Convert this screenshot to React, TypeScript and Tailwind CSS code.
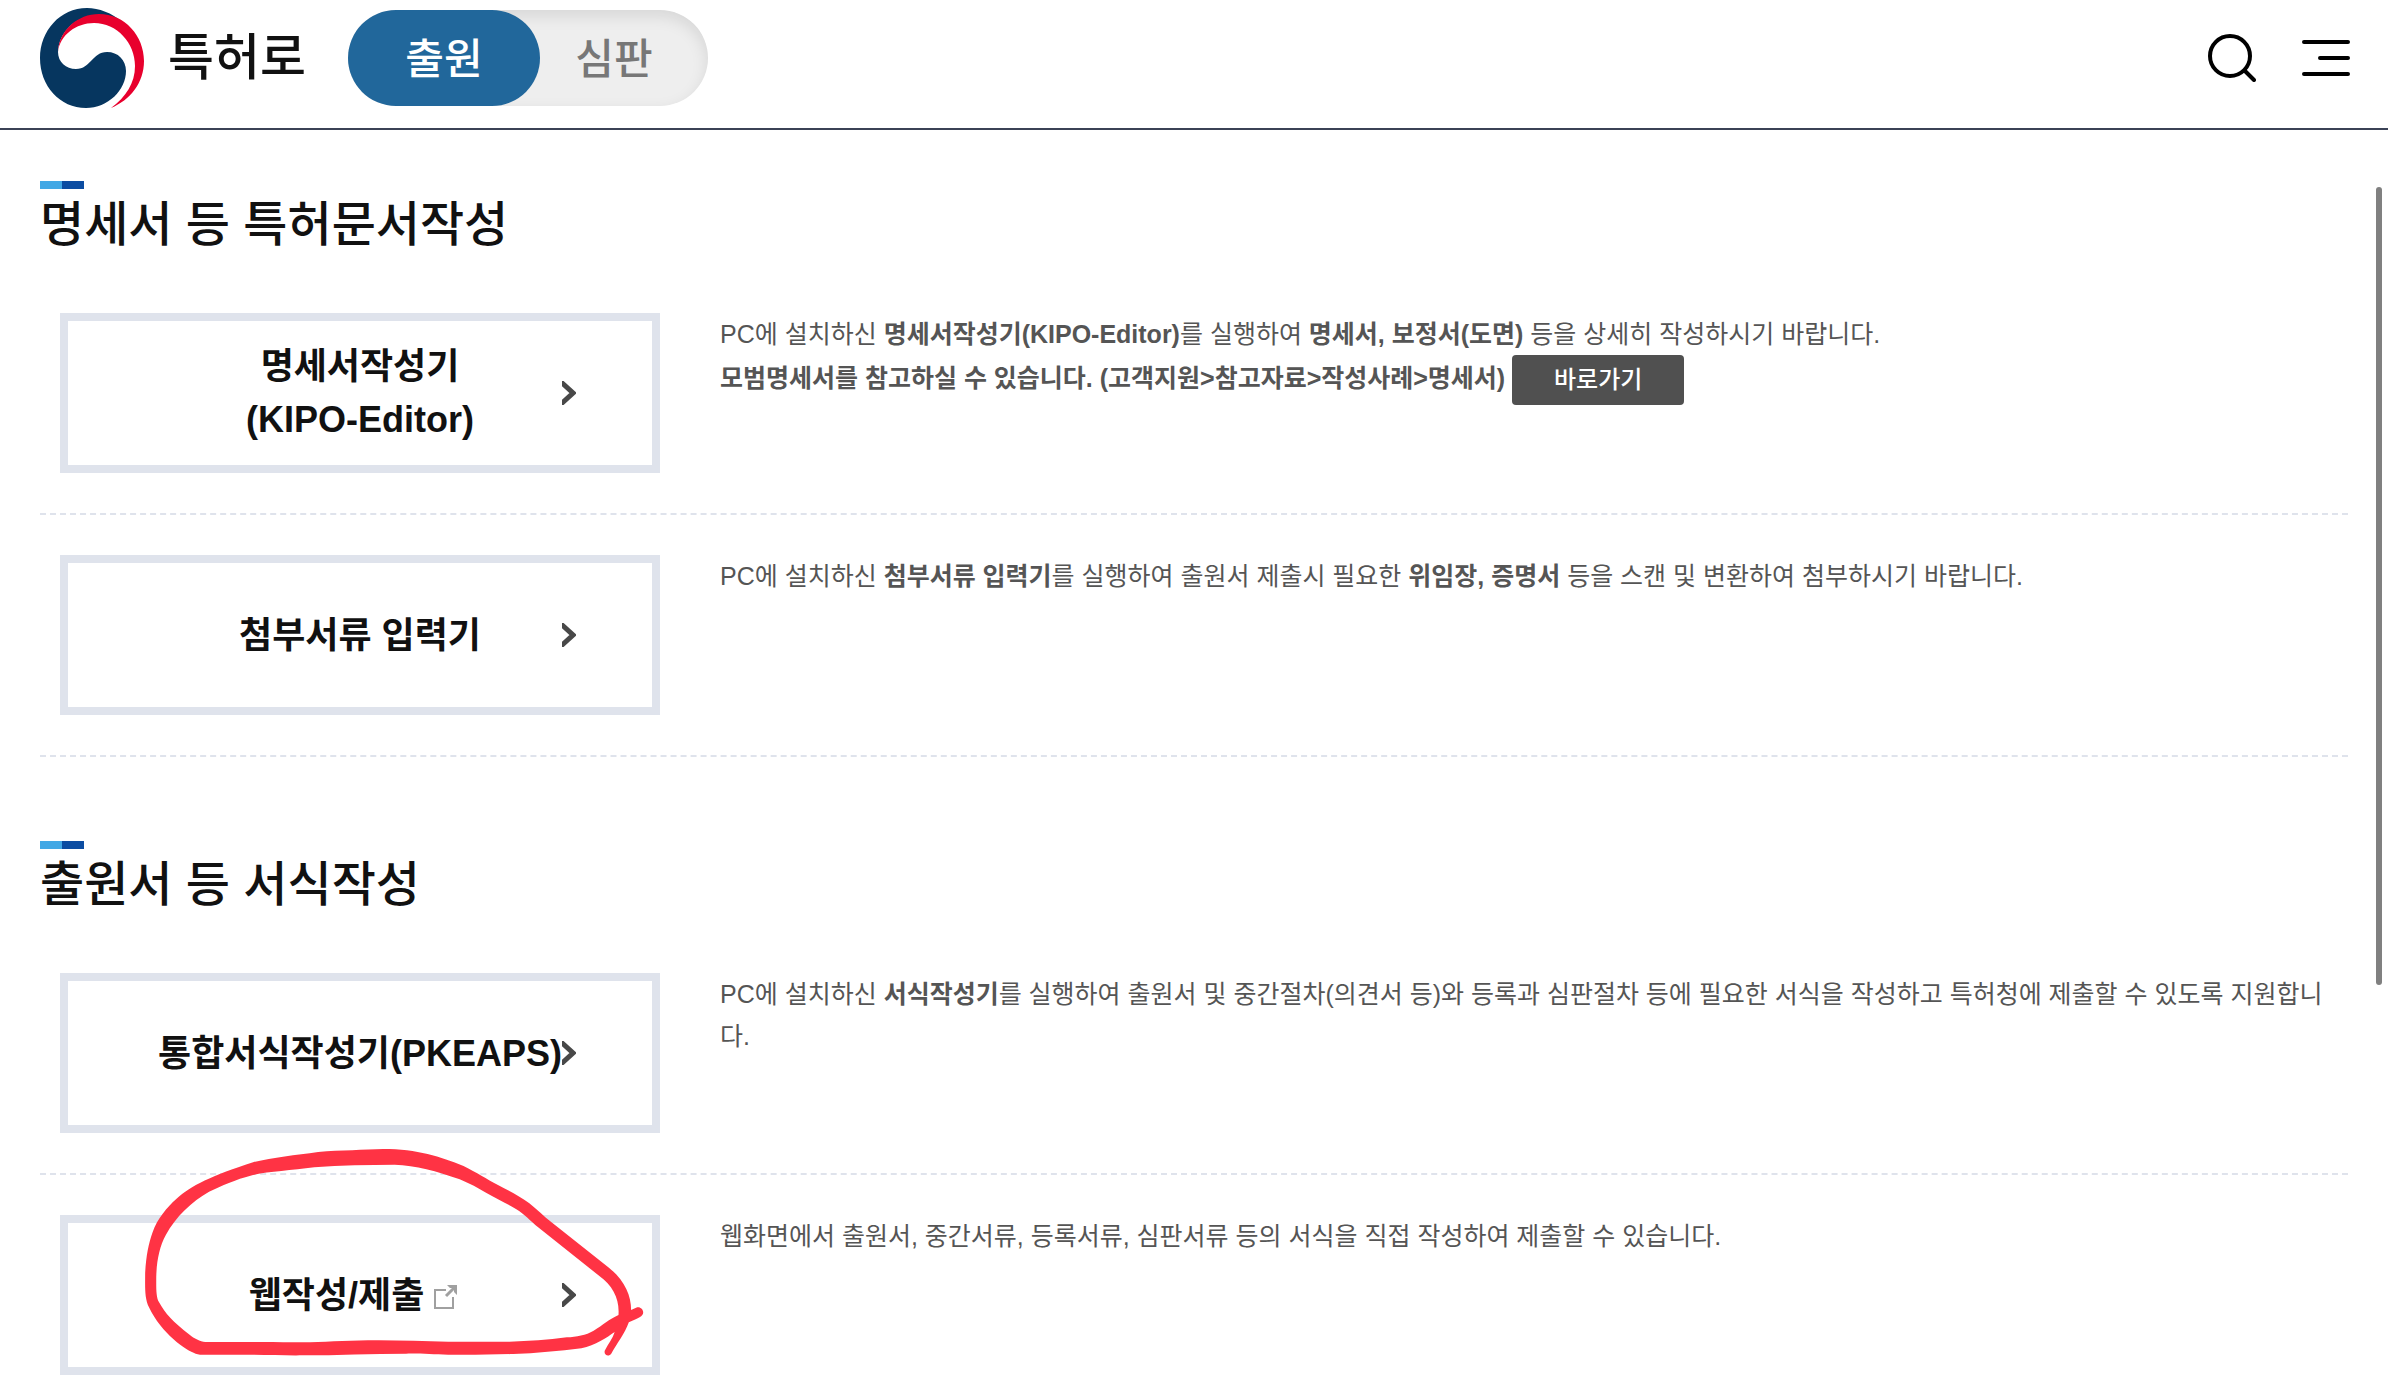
import type { ReactNode } from 'react';

const tools: { title: string; items: { name: ReactNode; external?: boolean; marked?: boolean; body: ReactNode }[] }[] = [
  {
    title: '명세서 등 특허문서작성',
    items: [
      {
        name: <>명세서작성기<br />(KIPO-Editor)</>,
        body: (
          <>
            PC에 설치하신 <Strong>명세서작성기(KIPO-Editor)</Strong>를 실행하여 <Strong>명세서, 보정서(도면)</Strong> 등을 상세히 작성하시기 바랍니다.
            <br />
            <Strong>모범명세서를 참고하실 수 있습니다. (고객지원&gt;참고자료&gt;작성사례&gt;명세서)</Strong>{' '}
            <button type="button" className="h-[50px] w-[172px] rounded bg-[#505050] align-middle text-2xl font-medium text-white">
              바로가기
            </button>
          </>
        ),
      },
      {
        name: '첨부서류 입력기',
        body: (
          <>
            PC에 설치하신 <Strong>첨부서류 입력기</Strong>를 실행하여 출원서 제출시 필요한 <Strong>위임장, 증명서</Strong> 등을 스캔 및 변환하여 첨부하시기 바랍니다.
          </>
        ),
      },
    ],
  },
  {
    title: '출원서 등 서식작성',
    items: [
      {
        name: '통합서식작성기(PKEAPS)',
        body: (
          <>
            PC에 설치하신 <Strong>서식작성기</Strong>를 실행하여 출원서 및 중간절차(의견서 등)와 등록과 심판절차 등에 필요한 서식을 작성하고 특허청에 제출할 수 있도록 지원합니다.
          </>
        ),
      },
      {
        name: '웹작성/제출',
        external: true,
        marked: true,
        body: '웹화면에서 출원서, 중간서류, 등록서류, 심판서류 등의 서식을 직접 작성하여 제출할 수 있습니다.',
      },
    ],
  },
];

function Strong({ children }: { children: ReactNode }) {
  return <strong className="font-bold">{children}</strong>;
}

function Logo() {
  return (
    <svg className="h-[100px] w-[104px]" viewBox="0 0 104 100" aria-hidden="true">
      <path fill="#06365f" d="M82 14C72 5 59 0 47 0C20 0 0 23 0 50C0 78 20 100 46 100C68 100 86 82 86 63C86 52 78 44 67 44C52 44 51 61 36 61C26 61 18 54 18 44C19 25 34 8 58 7C68 7 76 9 82 14Z" />
      <path fill="#e8002d" d="M18 44C19 22 38 6 59 6C85 6 104 28 104 53C104 75 90 92 71 100C86 89 95 75 95 58C95 35 77 15 54 15C36 15 20 27 18 44Z" />
    </svg>
  );
}

function RedMark() {
  return (
    <svg
      className="pointer-events-none absolute -top-[95px] left-10 z-10 h-[269px] w-[600px]"
      viewBox="0 0 1568 807"
      preserveAspectRatio="none"
      aria-hidden="true"
    >
      <path
        fill="#ff3344"
        fillRule="evenodd"
        d="M250 701C225 692 160 640 128 562C116 535 118 500 118 460C120 410 127 370 137 338C150 295 175 262 200 236C240 196 290 168 400 127C450 112 510 106 570 96C630 90 690 90 740 87C830 87 890 110 950 138C985 158 1010 177 1040 195C1070 213 1097 228 1122 250C1142 268 1160 290 1180 307L1330 443C1370 480 1388 525 1388 570L1401 563C1412 558 1422 570 1419 581C1416 592 1398 598 1382 607C1372 640 1350 672 1336 701C1330 711 1316 706 1319 692C1328 672 1340 656 1345 636C1325 652 1295 676 1258 685C1200 693 1140 700 1080 702C1020 704 960 705 910 704C870 704 840 700 800 701C710 701 620 706 530 706C490 707 440 704 400 704H275C265 704 257 704 250 701ZM275 666C262 665 245 655 235 645C190 605 170 580 154 546C146 530 147 500 147 470C148 425 155 380 172 345C198 290 240 244 285 215C320 197 350 180 400 165C440 155 500 151 560 142C630 135 700 135 770 134C825 136 880 153 940 178C965 190 990 205 1010 219C1040 238 1065 252 1087 267C1110 283 1125 303 1145 322L1305 468C1340 498 1358 535 1355 585C1330 598 1315 615 1290 632C1270 646 1245 650 1220 652C1170 660 1120 663 1070 665H910C840 663 770 660 700 661C640 662 580 667 530 667C490 667 440 665 400 666Z"
      />
    </svg>
  );
}

function Chevron() {
  return (
    <svg className="absolute right-[76px] h-6 w-3.5" viewBox="0 0 14 24" fill="none" aria-hidden="true">
      <path d="M-1 1L11 12L-1 23" stroke="#484848" strokeWidth="5" />
    </svg>
  );
}

function ExternalIcon() {
  return (
    <svg className="mt-1 mr-3.5 ml-2.5 h-6 w-[23px]" viewBox="0 0 23 24" fill="none" stroke="#a0a0a0" strokeWidth="2" aria-hidden="true">
      <path d="M12 5H1V23H19V12" />
      <path d="M20 3L12 11" strokeWidth="3" />
      <path d="M13 0H23V10L20 7V3H16Z" fill="#a0a0a0" stroke="none" />
    </svg>
  );
}

export default function App() {
  return (
    <div className="relative flex h-screen flex-col overflow-hidden bg-white font-['Liberation_Sans','Noto_Sans_CJK_KR',sans-serif] text-[#111]">
      <header className="flex h-[130px] shrink-0 items-start justify-between border-b-2 border-[#3b4256] pr-[38px] pl-10">
        <div className="flex items-start">
          <a href="#" className="flex items-center pt-2">
            <Logo />
            <span className="ml-6 text-[50px] leading-[100px] font-medium">특허로</span>
          </a>
          <nav className="mt-2.5 ml-[42px] flex h-24 w-[360px] rounded-full bg-[#eee] text-[42px] leading-[100px] font-medium shadow-[inset_0_6px_16px_rgba(0,0,0,0.1)]">
            <a href="#" aria-current="page" className="w-48 rounded-full bg-[#21679b] text-center text-white">출원</a>
            <a href="#" className="w-[148px] text-center text-[#777]">심판</a>
          </nav>
        </div>
        <div className="flex gap-[46px] pt-[34px]">
          <button type="button" aria-label="검색">
            <svg className="size-12" viewBox="0 0 48 48" fill="none" stroke="#000" strokeWidth="4" strokeLinecap="round">
              <circle cx="22" cy="22" r="20" />
              <path d="M37 37L46 46" />
            </svg>
          </button>
          <button type="button" aria-label="전체메뉴">
            <svg className="size-12" viewBox="0 0 48 48" fill="none" stroke="#000" strokeWidth="4" strokeLinecap="round">
              <path d="M2 8H46M18 24H46M2 40H46" />
            </svg>
          </button>
        </div>
      </header>

      <main className="flex flex-col gap-[84px] px-10 pt-[51px]">
        {tools.map((section) => (
          <section key={section.title}>
            <div className="flex h-2 w-11">
              <span className="flex-1 bg-[#42a8e5]" />
              <span className="flex-1 bg-[#0c4da2]" />
            </div>
            <h2 className="h-[84px] text-5xl leading-[72px] font-medium">{section.title}</h2>
            <ul>
              {section.items.map((item, i) => (
                <li key={i} className="flex border-b-2 border-dashed border-[#dfe3ec] px-5 py-10">
                  <div className="relative shrink-0">
                    <a href="#" className="relative flex h-40 w-[600px] items-center justify-center border-8 border-[#dfe3ec] text-center text-4xl leading-[53px] font-bold">
                      <span>{item.name}</span>
                      {item.external && <ExternalIcon />}
                      <Chevron />
                    </a>
                    {item.marked && <RedMark />}
                  </div>
                  <p className="ml-[60px] text-[25px] leading-[42px] text-[#555]">{item.body}</p>
                </li>
              ))}
            </ul>
          </section>
        ))}
      </main>

      <div className="absolute top-[187px] right-1.5 h-[798px] w-1.5 rounded-full bg-[#808080]" />
    </div>
  );
}
